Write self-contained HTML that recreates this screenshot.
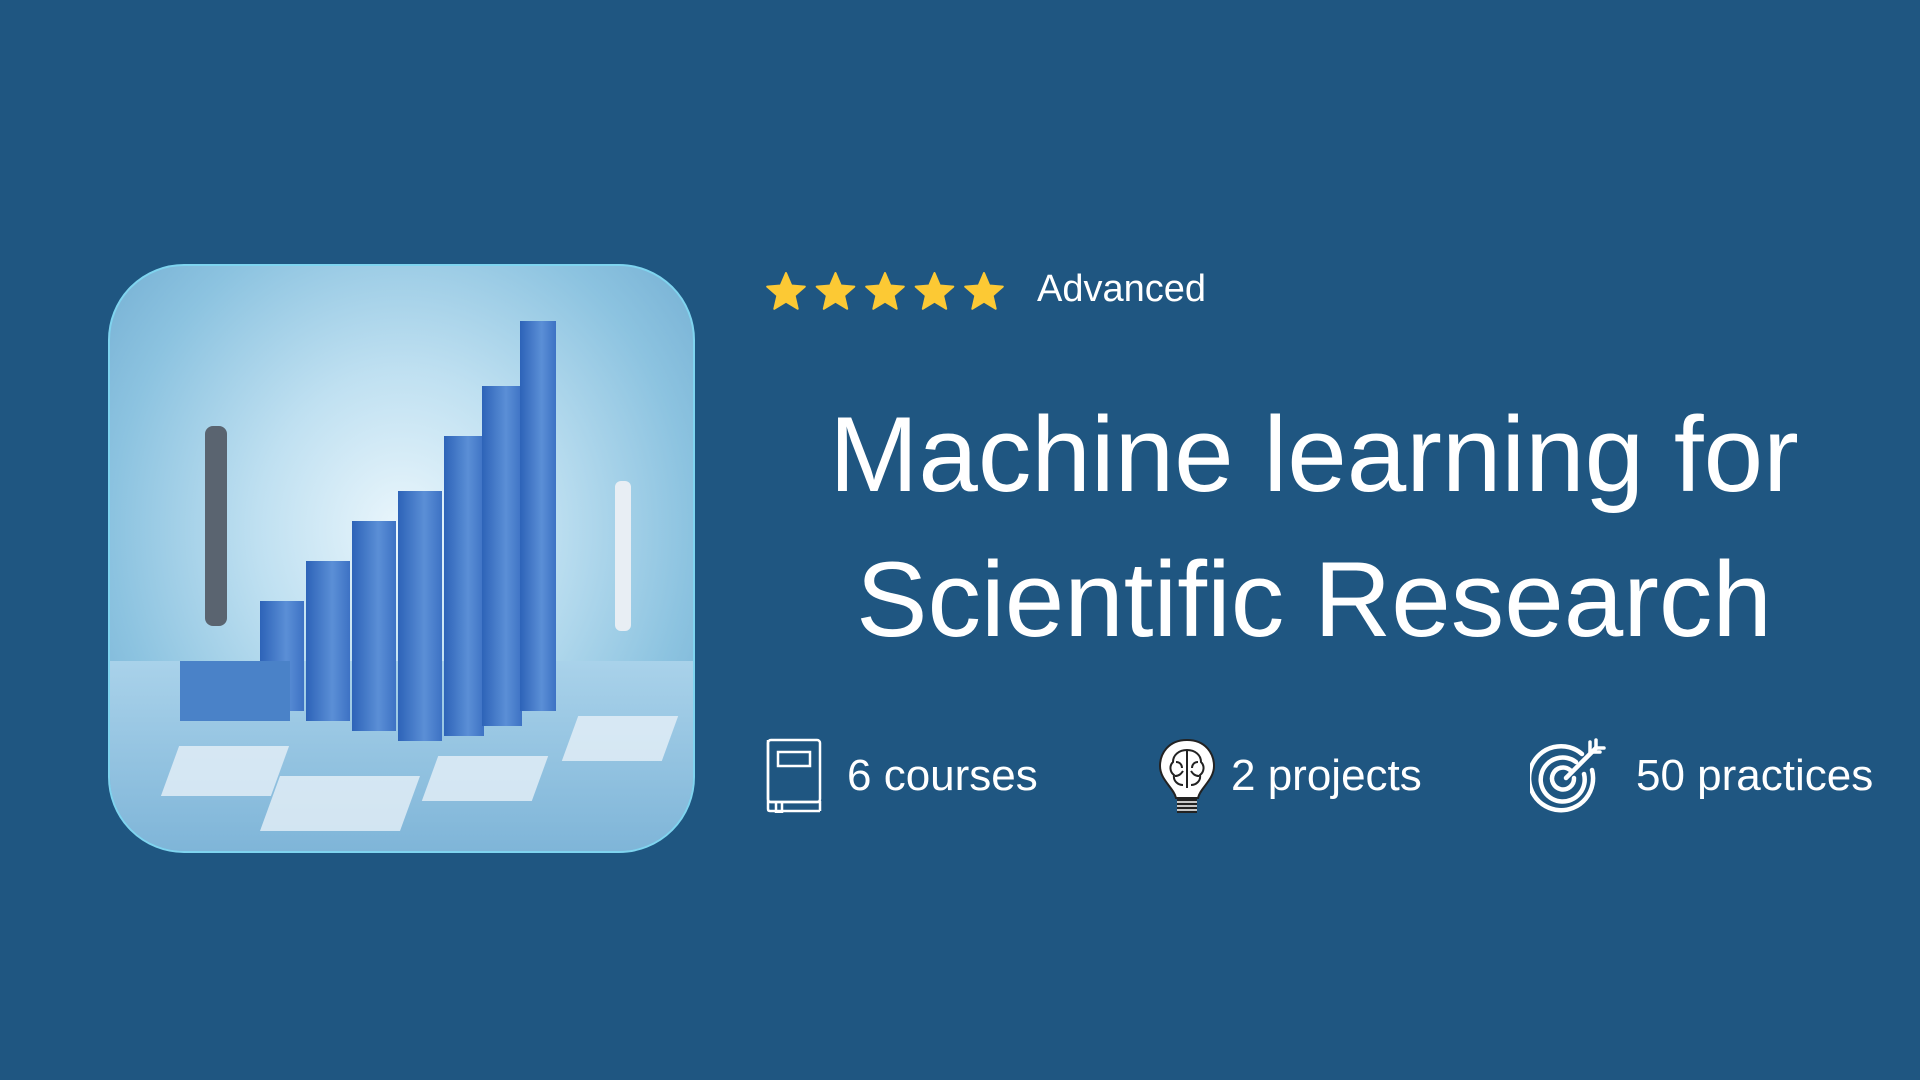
<!DOCTYPE html>
<html><head><meta charset="utf-8"><style>
html,body{margin:0;padding:0}
body{width:1920px;height:1080px;background:#1f5681;position:relative;overflow:hidden;font-family:"Liberation Sans",sans-serif;color:#fff}
.card{position:absolute;left:108px;top:264px;width:583px;height:585px;border-radius:76px;border:2px solid #7fd4ef;overflow:hidden;
background:radial-gradient(ellipse at 50% 45%,#eaf6fc 0%,#bfe0f1 35%,#8cc3e0 70%,#6ea9cf 100%)}
.bar{position:absolute;bottom:0;background:linear-gradient(90deg,#2d63b8,#5b8fd6 60%,#3d72c4)}
.t{position:absolute;white-space:nowrap}
</style></head><body>
<div class="card">
  <div style="position:absolute;left:0;right:0;bottom:0;height:190px;background:linear-gradient(180deg,#a9d2ea,#7fb5d8)"></div>
  <div class="bar" style="left:150px;width:44px;height:110px;bottom:140px"></div>
  <div class="bar" style="left:196px;width:44px;height:160px;bottom:130px"></div>
  <div class="bar" style="left:242px;width:44px;height:210px;bottom:120px"></div>
  <div class="bar" style="left:288px;width:44px;height:250px;bottom:110px"></div>
  <div class="bar" style="left:334px;width:40px;height:300px;bottom:115px"></div>
  <div class="bar" style="left:372px;width:40px;height:340px;bottom:125px"></div>
  <div class="bar" style="left:410px;width:36px;height:390px;bottom:140px"></div>
  <div class="bar" style="left:70px;width:110px;height:60px;bottom:130px;background:#4a82c8"></div>
  <div style="position:absolute;left:95px;top:160px;width:22px;height:200px;background:#5a6470;border-radius:8px"></div>
  <div style="position:absolute;left:505px;top:215px;width:16px;height:150px;background:#e8eef4;border-radius:6px"></div>
  <div style="position:absolute;left:60px;top:480px;width:110px;height:50px;background:#e6f0f8;transform:skewX(-20deg);opacity:.8"></div>
  <div style="position:absolute;left:160px;top:510px;width:140px;height:55px;background:#e6f0f8;transform:skewX(-20deg);opacity:.8"></div>
  <div style="position:absolute;left:320px;top:490px;width:110px;height:45px;background:#e6f0f8;transform:skewX(-20deg);opacity:.8"></div>
  <div style="position:absolute;left:460px;top:450px;width:100px;height:45px;background:#e6f0f8;transform:skewX(-20deg);opacity:.8"></div>
</div>

<svg style="position:absolute;left:766px;top:272px" width="245" height="40" viewBox="0 0 245 40">
  <defs><path id="s" d="M20 1 L25.3 13.5 L38.8 14.6 L28.6 23.5 L31.7 36.8 L20 29.7 L8.3 36.8 L11.4 23.5 L1.2 14.6 L14.7 13.5 Z" fill="#fcc934" stroke="#fcc934" stroke-linejoin="round" stroke-width="2"/></defs>
  <use href="#s" x="0"/><use href="#s" x="49.5"/><use href="#s" x="99"/><use href="#s" x="148.5"/><use href="#s" x="198"/>
</svg>
<div class="t" style="left:1037px;top:268px;font-size:38px">Advanced</div>

<div class="t" style="left:1314px;top:382px;transform:translateX(-50%);font-size:107px;text-align:center;line-height:145px">Machine learning for<br>Scientific Research</div>

<svg style="position:absolute;left:766px;top:738px" width="56" height="75" viewBox="0 0 56 75" fill="none" stroke="#fff" stroke-width="2.5">
  <rect x="2" y="2" width="52" height="62" rx="3"/><path d="M2 64 v7 q0 2 2 2 h50 M2 64 h52 v9 M10 64 v10 h6 v-10"/>
  <rect x="12" y="14" width="32" height="14"/><line x1="2" y1="64" x2="2" y2="2"/>
</svg>
<div class="t" style="left:847px;top:751px;font-size:44px">6 courses</div>

<svg style="position:absolute;left:1156px;top:736px" width="62" height="80" viewBox="0 0 62 80">
  <path d="M31 4 C12 4 4 18 4 30 C4 44 18 52 20 62 H42 C44 52 58 44 58 30 C58 18 50 4 31 4Z" fill="#fff" stroke="#222" stroke-width="2"/>
  <path d="M31 14 V52 M31 14 c-8 0-14 5-14 12 c-4 4-3 10 1 13 c-1 6 4 10 9 10 M31 14 c8 0 14 5 14 12 c4 4 3 10-1 13 c1 6-4 10-9 10 M20 26 c4 0 6 3 6 6 M42 26 c-4 0-6 3-6 6 M19 40 c4 0 6-2 8-5 M43 40 c-4 0-6-2-8-5" fill="none" stroke="#222" stroke-width="2"/>
  <rect x="21" y="62" width="20" height="15" fill="#222"/><path d="M21 66 H41 M21 70 H41 M21 74 H41" stroke="#fff" stroke-width="1.5"/>
</svg>
<div class="t" style="left:1231px;top:751px;font-size:44px">2 projects</div>

<svg style="position:absolute;left:1530px;top:738px" width="76" height="76" viewBox="0 0 76 76" fill="none" stroke="#fff" stroke-width="4.5" stroke-linecap="round">
  <path d="M52 16 A32 32 0 1 0 62 32"/><path d="M46 24 A22 22 0 1 0 54 36"/><path d="M40 32 A11 11 0 1 0 44 40"/>
  <path d="M36 40 L66 10"/><path d="M60 4 L60 14 L70 14 M66 2 V10 H74" stroke-width="3.5"/>
</svg>
<div class="t" style="left:1636px;top:751px;font-size:44px">50 practices</div>
</body></html>
